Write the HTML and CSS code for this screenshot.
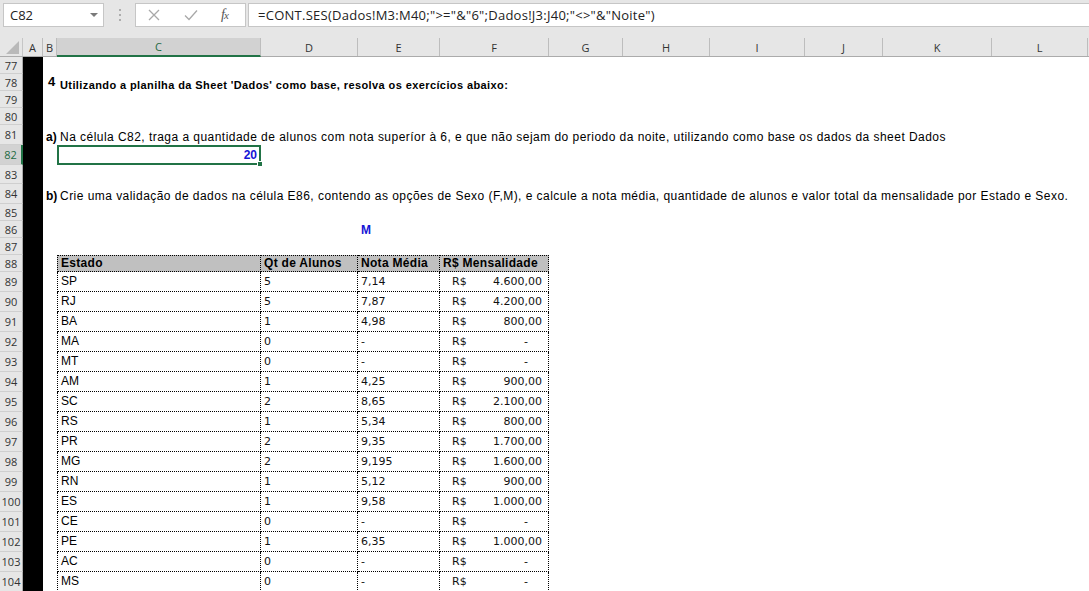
FILE: index.html
```html
<!DOCTYPE html>
<html lang="pt">
<head>
<meta charset="utf-8">
<title>Excel</title>
<link rel="stylesheet" href="styles.css">
</head>
<body>
<div class="app">
  <div class="fbar">
    <div class="namebox"><span class="nb-text">C82</span><span class="nb-arrow"></span></div>
    <div class="vdots"><svg width="4" height="14" viewBox="0 0 4 14"><circle cx="2" cy="2" r="1" fill="#9a9a9a"/><circle cx="2" cy="7" r="1" fill="#9a9a9a"/><circle cx="2" cy="12" r="1" fill="#9a9a9a"/></svg></div>
    <div class="fbtns">
      <svg class="ico" width="14" height="14" viewBox="0 0 14 14"><path d="M2 2 L12 12 M12 2 L2 12" stroke="#a8a8a8" stroke-width="1.3" fill="none"/></svg>
      <svg class="ico" width="16" height="14" viewBox="0 0 16 14"><path d="M2 7.5 L6 11.5 L14 2.5" stroke="#a8a8a8" stroke-width="1.3" fill="none"/></svg>
      <span class="fx">f<span class="fx-x">x</span></span>
    </div>
    <div class="formula">=CONT.SES(Dados!M3:M40;"&gt;="&amp;"6";Dados!J3:J40;"&lt;&gt;"&amp;"Noite")</div>
  </div>

  <div class="sheet">
    <div class="colhead">
      <div class="corner"><span class="tri"></span></div>
      <div class="ch">A</div><div class="ch">B</div><div class="ch sel">C</div><div class="ch">D</div><div class="ch">E</div><div class="ch">F</div><div class="ch">G</div><div class="ch">H</div><div class="ch">I</div><div class="ch">J</div><div class="ch">K</div><div class="ch">L</div><div class="ch last"></div>
    </div>

    <div class="row h17"><div class="rh">77</div><div class="a"></div></div>
    <div class="row h17"><div class="rh">78</div><div class="a"></div><div class="b num4">4</div><div class="c span bold">Utilizando a planilha da Sheet 'Dados' como base, resolva os exercícios abaixo:</div></div>
    <div class="row h17"><div class="rh">79</div><div class="a"></div></div>
    <div class="row h17"><div class="rh">80</div><div class="a"></div></div>
    <div class="row h20"><div class="rh">81</div><div class="a"></div><div class="b lbl">a)</div><div class="c span txt">Na célula C82, traga a quantidade de alunos com nota superíor à 6, e que não sejam do periodo da noite, utilizando como base os dados da sheet Dados</div></div>
    <div class="row h20"><div class="rh sel">82</div><div class="a"></div><div class="c selcell"><span class="val20">20</span><span class="handle"></span></div></div>
    <div class="row h19"><div class="rh">83</div><div class="a"></div></div>
    <div class="row h20"><div class="rh">84</div><div class="a"></div><div class="b lbl">b)</div><div class="c span txt">Crie uma validação de dados na célula E86, contendo as opções de Sexo (F,M), e calcule a nota média, quantidade de alunos e valor total da mensalidade por Estado e Sexo.</div></div>
    <div class="row h17"><div class="rh">85</div><div class="a"></div></div>
    <div class="row h17"><div class="rh">86</div><div class="a"></div><div class="e mval">M</div></div>
    <div class="row h17"><div class="rh">87</div><div class="a"></div></div>
    <div class="row h17 thead"><div class="rh">88</div><div class="a"></div><div class="c t first">Estado</div><div class="d t">Qt de Alunos</div><div class="e t">Nota Média</div><div class="f t">R$ Mensalidade</div></div>

    <div class="row h20 trow"><div class="rh">89</div><div class="a"></div><div class="c t first">SP</div><div class="d t n">5</div><div class="e t n">7,14</div><div class="f t acc"><span>R$</span><span>4.600,00</span></div></div>
    <div class="row h20 trow"><div class="rh">90</div><div class="a"></div><div class="c t first">RJ</div><div class="d t n">5</div><div class="e t n">7,87</div><div class="f t acc"><span>R$</span><span>4.200,00</span></div></div>
    <div class="row h20 trow"><div class="rh">91</div><div class="a"></div><div class="c t first">BA</div><div class="d t n">1</div><div class="e t n">4,98</div><div class="f t acc"><span>R$</span><span>800,00</span></div></div>
    <div class="row h20 trow"><div class="rh">92</div><div class="a"></div><div class="c t first">MA</div><div class="d t n">0</div><div class="e t n">-</div><div class="f t acc"><span>R$</span><span class="dash">-</span></div></div>
    <div class="row h20 trow"><div class="rh">93</div><div class="a"></div><div class="c t first">MT</div><div class="d t n">0</div><div class="e t n">-</div><div class="f t acc"><span>R$</span><span class="dash">-</span></div></div>
    <div class="row h20 trow"><div class="rh">94</div><div class="a"></div><div class="c t first">AM</div><div class="d t n">1</div><div class="e t n">4,25</div><div class="f t acc"><span>R$</span><span>900,00</span></div></div>
    <div class="row h20 trow"><div class="rh">95</div><div class="a"></div><div class="c t first">SC</div><div class="d t n">2</div><div class="e t n">8,65</div><div class="f t acc"><span>R$</span><span>2.100,00</span></div></div>
    <div class="row h20 trow"><div class="rh">96</div><div class="a"></div><div class="c t first">RS</div><div class="d t n">1</div><div class="e t n">5,34</div><div class="f t acc"><span>R$</span><span>800,00</span></div></div>
    <div class="row h20 trow"><div class="rh">97</div><div class="a"></div><div class="c t first">PR</div><div class="d t n">2</div><div class="e t n">9,35</div><div class="f t acc"><span>R$</span><span>1.700,00</span></div></div>
    <div class="row h20 trow"><div class="rh">98</div><div class="a"></div><div class="c t first">MG</div><div class="d t n">2</div><div class="e t n">9,195</div><div class="f t acc"><span>R$</span><span>1.600,00</span></div></div>
    <div class="row h20 trow"><div class="rh">99</div><div class="a"></div><div class="c t first">RN</div><div class="d t n">1</div><div class="e t n">5,12</div><div class="f t acc"><span>R$</span><span>900,00</span></div></div>
    <div class="row h20 trow"><div class="rh">100</div><div class="a"></div><div class="c t first">ES</div><div class="d t n">1</div><div class="e t n">9,58</div><div class="f t acc"><span>R$</span><span>1.000,00</span></div></div>
    <div class="row h20 trow"><div class="rh">101</div><div class="a"></div><div class="c t first">CE</div><div class="d t n">0</div><div class="e t n">-</div><div class="f t acc"><span>R$</span><span class="dash">-</span></div></div>
    <div class="row h20 trow"><div class="rh">102</div><div class="a"></div><div class="c t first">PE</div><div class="d t n">1</div><div class="e t n">6,35</div><div class="f t acc"><span>R$</span><span>1.000,00</span></div></div>
    <div class="row h20 trow"><div class="rh">103</div><div class="a"></div><div class="c t first">AC</div><div class="d t n">0</div><div class="e t n">-</div><div class="f t acc"><span>R$</span><span class="dash">-</span></div></div>
    <div class="row h20 trow"><div class="rh">104</div><div class="a"></div><div class="c t first">MS</div><div class="d t n">0</div><div class="e t n">-</div><div class="f t acc"><span>R$</span><span class="dash">-</span></div></div>
  </div>
</div>
</body>
</html>
```

FILE: styles.css
```css
* { box-sizing: border-box; }
html, body { margin: 0; padding: 0; }
body {
  width: 1089px;
  height: 591px;
  overflow: hidden;
  background: #fff;
  font-family: "Liberation Sans", Arial, sans-serif;
  color: #000;
}
.app { display: flex; flex-direction: column; width: 1089px; }

/* formula bar */
.fbar {
  display: flex;
  align-items: flex-start;
  height: 38px;
  padding-top: 3px;
  padding-left: 3px;
  background: #e6e6e6;
  font-family: "Open Sans", "Noto Sans", sans-serif;
}
.namebox {
  display: flex;
  align-items: center;
  width: 101px;
  height: 24px;
  background: #fff;
  border: 1px solid #c6c6c6;
  padding-left: 6px;
  font-size: 13px;
  color: #222;
}
.nb-text { flex: 1; }
.nb-arrow {
  width: 0; height: 0;
  margin-right: 5px;
  border-left: 4px solid transparent;
  border-right: 4px solid transparent;
  border-top: 4px solid #7a7a7a;
}
.vdots { width: 31px; height: 24px; display: flex; align-items: center; justify-content: center; }
.fbtns {
  display: flex;
  align-items: center;
  width: 111px;
  height: 24px;
  background: #fff;
  border: 1px solid #c6c6c6;
  padding-left: 11px;
  gap: 22px;
}
.fx {
  font-family: "Liberation Serif", serif;
  font-style: italic;
  font-size: 14px;
  color: #555;
  letter-spacing: -1px;
}
.fx-x { font-size: 11px; }
.formula {
  flex: 1;
  height: 24px;
  margin-left: 2px;
  background: #fff;
  border: 1px solid #c6c6c6;
  border-right: none;
  padding-left: 9px;
  font-size: 13px;
  letter-spacing: 0.26px;
  line-height: 22px;
  color: #222;
  white-space: nowrap;
}

/* sheet grid */
.sheet {
  --cols: 23px 20px 14px 204px 97px 82px 109px 74px 87px 95px 78px 109px 96px 1fr;
}
.colhead, .row {
  display: grid;
  grid-template-columns: var(--cols);
}
.colhead {
  height: 19px;
  background: #e6e6e6;
  border-bottom: 1px solid #ababab;
  font-family: "Open Sans", "Noto Sans", sans-serif;
  font-size: 11px;
  color: #333;
}
.corner {
  display: flex;
  align-items: flex-end;
  justify-content: flex-end;
  padding: 0 3px 2px 0;
  border-right: 1px solid #c6c6c6;
}
.tri {
  width: 0; height: 0;
  border-left: 13px solid transparent;
  border-bottom: 13px solid #b9b9b9;
}
.ch {
  display: flex;
  align-items: center;
  justify-content: center;
  border-right: 1px solid #bdbdbd;
}
.ch.sel {
  background: #d2d2d2;
  color: #1e6b43;
  border-bottom: 2px solid #217346;
  margin-bottom: -1px;
}
.ch.last { border-right: none; }

.h17 { height: 17px; }
.h19 { height: 19px; }
.h20 { height: 20px; }

.rh {
  display: flex;
  align-items: center;
  justify-content: center;
  background: #e6e6e6;
  border-right: 1px solid #ababab;
  border-bottom: 1px solid #cfcfcf;
  font-family: "Open Sans", "Noto Sans", sans-serif;
  font-size: 11px;
  color: #333;
}
.rh.sel {
  background: #d2d2d2;
  color: #1e6b43;
  border-right: 2px solid #217346;
}
.a { background: #000; grid-column: 2; }
.b { grid-column: 3; }
.c { grid-column: 4; }
.d { grid-column: 5; }
.e { grid-column: 6; }
.f { grid-column: 7; }
.span { grid-column: 4 / -1; }

.b, .c, .d, .e, .f { display: flex; align-items: flex-end; white-space: nowrap; min-width: 0; }

.num4 {
  align-items: flex-start;
  font-weight: bold;
  font-size: 13px;
  line-height: 10px;
  padding: 3px 0 0 5px;
  overflow: visible;
}
.bold {
  font-weight: bold;
  font-size: 11px;
  line-height: 11px;
  letter-spacing: 0.4px;
  padding: 0 0 0 3px;
}
.lbl {
  font-weight: bold;
  font-size: 12px;
  padding: 0 0 1px 3px;
  overflow: visible;
}
.txt {
  font-size: 12px;
  letter-spacing: 0.46px;
  padding: 0 0 1px 3px;
}
.selcell {
  border: 2px solid #217346;
  justify-content: flex-end;
  align-items: center;
  padding-right: 2px;
  position: relative;
}
.val20 { font-weight: bold; font-size: 12px; color: #1515d6; }
.handle {
  position: absolute;
  right: -4px;
  bottom: -4px;
  width: 6px;
  height: 6px;
  background: #217346;
  border: 1px solid #fff;
}
.mval {
  font-weight: bold;
  font-size: 12px;
  color: #1515d6;
  padding: 0 0 1px 3px;
}

/* table */
.t {
  border-right: 1px dotted #000;
  border-bottom: 1px dotted #000;
  font-size: 12px;
  padding-left: 3px;
  padding-bottom: 3px;
}
.t.first { border-left: 1px dotted #000; }
.thead .t {
  background: #c0c0c0;
  border-top: 1px dotted #000;
  font-weight: bold;
  letter-spacing: 0.3px;
  padding-bottom: 1px;
}
.n { font-family: "DejaVu Sans", sans-serif; font-size: 11px; color: #111; }
.acc {
  justify-content: space-between;
  padding-left: 12px;
  padding-right: 6px;
  font-family: "DejaVu Sans", sans-serif;
  font-size: 11px;
  color: #111;
}
.dash { padding-right: 14px; }
```
